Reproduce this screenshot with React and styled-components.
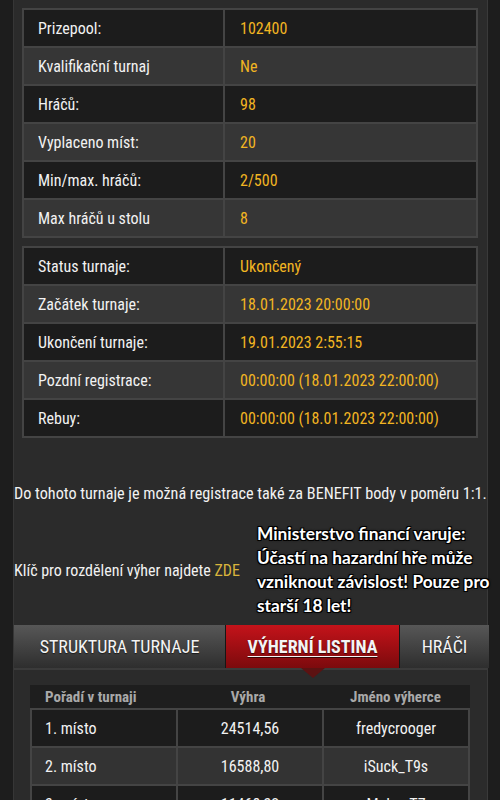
import React from 'react';
import styled, { createGlobalStyle } from 'styled-components';

const narrow = `"Roboto Condensed", "Liberation Sans Narrow", "DejaVu Sans Condensed", Roboto, sans-serif`;

const GlobalStyle = createGlobalStyle`
  html, body {
    margin: 0;
    padding: 0;
    background: #1d1d1d;
  }
  body {
    font-family: ${narrow};
  }
`;

const Page = styled.div`
  width: 500px;
  height: 800px;
  overflow: hidden;
  background: #1d1d1d;
`;

const Panel = styled.div`
  margin-left: 13px;
  width: 473px;
  min-height: 800px;
  background: #2b2b2b;
  border-left: 1px solid #363636;
  border-right: 1px solid #3a3a3a;
  padding-top: 8px;
`;

const InfoTable = styled.div`
  display: grid;
  grid-template-columns: 199px 1fr;
  gap: 2px;
  padding: 2px;
  margin: ${p => (p.$second ? '8px' : '0')} 9px 0 8px;
  background: #444;
`;

const Cell = styled.div`
  height: 36px;
  display: flex;
  align-items: center;
  padding-left: ${p => (p.$value ? '15px' : '14px')};
  background: ${p => (p.$alt ? '#363636' : '#1c1c1c')};
  color: ${p => (p.$value ? '#f2b522' : '#f2f2f2')};
  font-size: 16px;
  white-space: nowrap;
`;

const Note = styled.p`
  margin: 46px 0 0;
  color: #f2f2f2;
  font-size: 16.2px;
  line-height: 20px;
  white-space: nowrap;
`;

const InfoRow = styled.div`
  display: flex;
  align-items: center;
  justify-content: space-between;
  margin-top: 18px;
`;

const KeyText = styled.span`
  color: #f2f2f2;
  font-size: 16px;
`;

const Link = styled.a`
  color: #d9b43c;
  text-decoration: none;
`;

const Warning = styled.div`
  width: 230px;
  font-family: Lato, "DejaVu Sans", sans-serif;
  font-weight: 700;
  font-size: 17.3px;
  line-height: 24px;
  color: #ffffff;
  white-space: nowrap;
  text-shadow: 1px 1px 0 #000, -1px -1px 0 #000, 1px -1px 0 #000, -1px 1px 0 #000, 0 0 3px #000;
`;

const TabBar = styled.div`
  display: flex;
  height: 43px;
  margin-top: 7px;
`;

const Tab = styled.div`
  position: relative;
  flex: 0 0 ${p => p.$w}px;
  display: flex;
  align-items: center;
  justify-content: center;
  color: #f4f4f4;
  font-size: 18px;
  font-weight: ${p => (p.$active ? 700 : 400)};
  text-decoration: ${p => (p.$active ? 'underline' : 'none')};
  text-underline-offset: 3px;
  background: ${p =>
    p.$active
      ? 'linear-gradient(#c4131a, #7c0a0d)'
      : 'linear-gradient(#575757, #2e2e2e)'};
  border-right: 1px solid #161616;
  text-shadow: 0 1px 1px rgba(0, 0, 0, 0.6);

  &:last-child {
    border-right: none;
  }
`;

const TabArrow = styled.span`
  position: absolute;
  left: 50%;
  bottom: -10px;
  margin-left: -12px;
  width: 0;
  height: 0;
  border-left: 12px solid transparent;
  border-right: 12px solid transparent;
  border-top: 10px solid #5c1212;
  z-index: 2;
`;

const TabContent = styled.div`
  border-top: 2px solid #3b3b3b;
  padding: 15px 17px 0 16px;
`;

const WinHead = styled.div`
  display: grid;
  grid-template-columns: 145px 146px 1fr;
  height: 23px;
  background: #1e1e1e;
  color: #a9a9a9;
  font-weight: 700;
  font-size: 15px;
`;

const HeadCell = styled.div`
  display: flex;
  align-items: center;
  justify-content: ${p => (p.$left ? 'flex-start' : 'center')};
  padding-left: ${p => (p.$left ? '15px' : '0')};
`;

const WinTable = styled.div`
  display: grid;
  grid-template-columns: 144px 144px 1fr;
  gap: 2px;
  padding: 2px;
  background: #444;
`;

const WinCell = styled.div`
  height: 36px;
  display: flex;
  align-items: center;
  justify-content: ${p => (p.$left ? 'flex-start' : 'center')};
  padding-left: ${p => (p.$left ? '13px' : '0')};
  background: ${p => (p.$alt ? '#333333' : '#1c1c1c')};
  color: #f2f2f2;
  font-size: 16px;
`;

const basicInfo = [
  ['Prizepool:', '102400'],
  ['Kvalifikační turnaj', 'Ne'],
  ['Hráčů:', '98'],
  ['Vyplaceno míst:', '20'],
  ['Min/max. hráčů:', '2/500'],
  ['Max hráčů u stolu', '8'],
];

const statusInfo = [
  ['Status turnaje:', 'Ukončený'],
  ['Začátek turnaje:', '18.01.2023 20:00:00'],
  ['Ukončení turnaje:', '19.01.2023 2:55:15'],
  ['Pozdní registrace:', '00:00:00 (18.01.2023 22:00:00)'],
  ['Rebuy:', '00:00:00 (18.01.2023 22:00:00)'],
];

const winners = [
  ['1. místo', '24514,56', 'fredycrooger'],
  ['2. místo', '16588,80', 'iSuck_T9s'],
  ['3. místo', '11468,32', 'MalmeT7'],
];

const renderInfo = rows =>
  rows.map(([label, value], i) => (
    <React.Fragment key={label}>
      <Cell $alt={i % 2 === 1}>{label}</Cell>
      <Cell $alt={i % 2 === 1} $value>{value}</Cell>
    </React.Fragment>
  ));

const App = () => {
  return (
    <Page>
      <GlobalStyle />
      <Panel>
        <InfoTable>{renderInfo(basicInfo)}</InfoTable>
        <InfoTable $second>{renderInfo(statusInfo)}</InfoTable>

        <Note>Do tohoto turnaje je možná registrace také za BENEFIT body v poměru 1:1.</Note>

        <InfoRow>
          <KeyText>
            Klíč pro rozdělení výher najdete <Link href="#">ZDE</Link>
          </KeyText>
          <Warning>
            Ministerstvo financí varuje:<br />
            Účastí na hazardní hře může<br />
            vzniknout závislost! Pouze pro<br />
            starší 18 let!
          </Warning>
        </InfoRow>

        <TabBar>
          <Tab $w={211}>STRUKTURA TURNAJE</Tab>
          <Tab $w={173} $active>
            VÝHERNÍ LISTINA
            <TabArrow />
          </Tab>
          <Tab $w={89}>HRÁČI</Tab>
        </TabBar>

        <TabContent>
          <WinHead>
            <HeadCell $left>Pořadí v turnaji</HeadCell>
            <HeadCell>Výhra</HeadCell>
            <HeadCell>Jméno výherce</HeadCell>
          </WinHead>
          <WinTable>
            {winners.map(([place, prize, name], i) => (
              <React.Fragment key={place}>
                <WinCell $left $alt={i % 2 === 1}>{place}</WinCell>
                <WinCell $alt={i % 2 === 1}>{prize}</WinCell>
                <WinCell $alt={i % 2 === 1}>{name}</WinCell>
              </React.Fragment>
            ))}
          </WinTable>
        </TabContent>
      </Panel>
    </Page>
  );
};

export default App;
